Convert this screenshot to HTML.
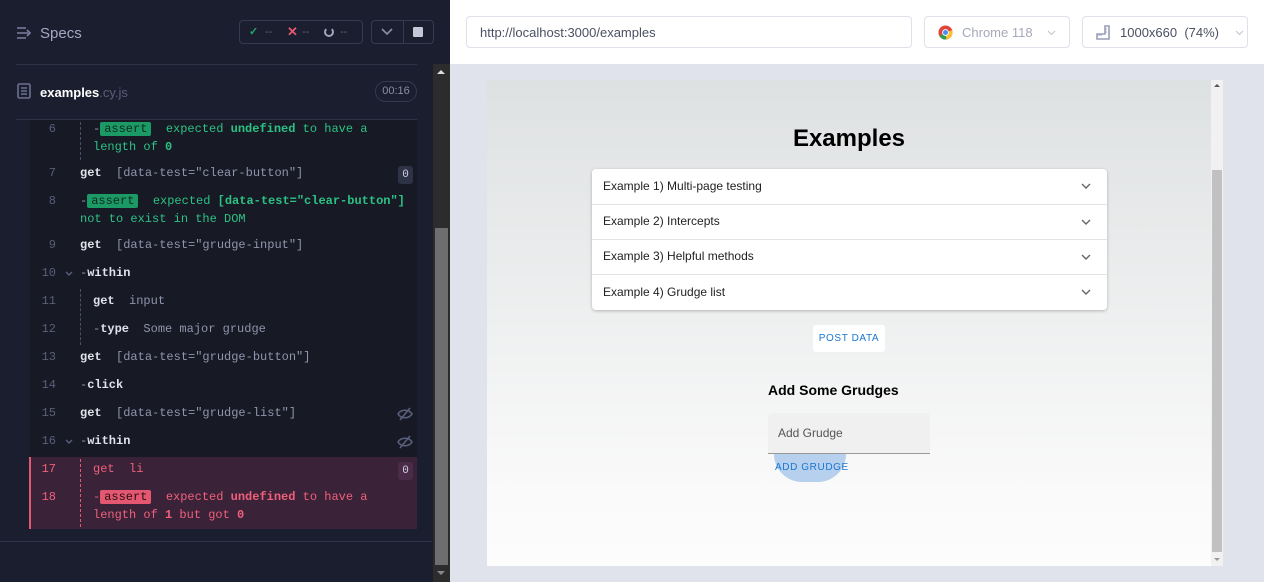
<!DOCTYPE html>
<html><head><meta charset="utf-8"><style>
*{box-sizing:border-box;margin:0;padding:0}
body{width:1264px;height:582px;overflow:hidden;position:relative;background:#e1e3ec;font-family:"Liberation Sans",sans-serif}
.a{position:absolute}
#left{left:0;top:0;width:450px;height:582px;background:#1b1e2e}
.mono{font-family:"Liberation Mono",monospace;font-size:12px;white-space:pre}
.ln{position:absolute;left:30px;width:26px;text-align:right;color:#5a5f7a;font-family:"Liberation Mono",monospace;font-size:12px}
.g{color:#e1e3ed;font-weight:bold}
.s{color:#9095ad}
.gr{color:#2cc283}
.gb{color:#2cc283;font-weight:bold}
.tag{background:#1c9a66;color:#0b2a1c;padding:0 4px;border-radius:2px}
.rt{color:#f0607a}
.rb{color:#f0607a;font-weight:bold}
.rtag{background:#e45770;color:#2a0d15;padding:0 4px;border-radius:2px}
.badge{position:absolute;left:398px;width:15px;height:18px;background:#2e3247;border-radius:3px;color:#d0d2e0;font-family:"Liberation Mono",monospace;font-size:11px;text-align:center;line-height:18px}
.acc{position:absolute;left:592px;width:515px;background:#fff;font-size:12px;color:#222;padding-left:11px}
.acc svg{position:absolute;right:16px;top:14px}
</style></head><body>
<div id="left" class="a">
  <svg class="a" style="left:16px;top:26px" width="16" height="14" viewBox="0 0 16 14"><path d="M1 2h9M1 7h11M1 12h9M11 4l3 3-3 3" stroke="#7b80a0" stroke-width="1.6" fill="none"/></svg>
  <div class="a" style="left:40px;top:25px;font-size:15px;color:#a4a8c0">Specs</div>
  <div class="a" style="left:239px;top:20px;width:124px;height:24px;border:1px solid #353a52;border-radius:4px;font-size:11px;color:#5c6180;line-height:22px">
    <span style="position:absolute;left:9px;color:#1fa971;font-weight:bold">✓</span><span style="position:absolute;left:25px">--</span>
    <span style="position:absolute;left:47px;color:#e45770;font-weight:bold;font-size:13px">✕</span><span style="position:absolute;left:62px">--</span>
    <span style="position:absolute;left:84px;top:6px;width:10px;height:10px;border:2px solid #a0a4bd;border-radius:50%;border-top-color:transparent"></span><span style="position:absolute;left:100px">--</span>
  </div>
  <div class="a" style="left:371px;top:20px;width:63px;height:24px;border:1px solid #353a52;border-radius:4px">
    <div class="a" style="left:31px;top:0;width:1px;height:22px;background:#353a52"></div>
    <svg class="a" style="left:9px;top:7px" width="12" height="8"><path d="M1 1l5 5 5-5" stroke="#8a8ea8" stroke-width="1.6" fill="none"/></svg>
    <div class="a" style="left:41px;top:6px;width:10px;height:10px;background:#c5c7d6;border-radius:1px"></div>
  </div>
  <div class="a" style="left:16px;top:64px;width:401px;height:1px;background:#2e3247"></div>
  <svg class="a" style="left:17px;top:83px" width="14" height="16"><rect x="1" y="1" width="12" height="14" rx="1.5" fill="none" stroke="#6b7090" stroke-width="1.6"/><path d="M4 5h6M4 8h6M4 11h6" stroke="#6b7090" stroke-width="1.4"/></svg>
  <div class="a" style="left:40px;top:85px;font-size:13px"><b style="color:#fff">examples</b><span style="color:#5a5f7a">.cy.js</span></div>
  <div class="a" style="left:375px;top:81px;width:42px;height:21px;border:1px solid #353a52;border-radius:11px;color:#8a8ea8;font-size:11px;text-align:center;line-height:19px">00:16</div>
  <div class="a" style="left:16px;top:119px;width:401px;height:1px;background:#2e3247"></div>
  <div class="a" style="left:30px;top:120px;width:387px;height:337px;background:#171925"></div>
  <div class="a" style="left:80px;top:122px;width:0;height:38px;border-left:1px dashed #4a4f6a"></div>
  <div class="a" style="left:80px;top:289px;width:0;height:56px;border-left:1px dashed #4a4f6a"></div>
  <div class="ln" style="top:122px">6</div>
  <div class="a mono" style="left:93px;top:122px"><span class="s">-</span><span class="tag">assert</span>  <span class="gr">expected</span> <span class="gb">undefined</span> <span class="gr">to have a</span></div>
  <div class="a mono" style="left:93px;top:140px"><span class="gr">length of</span> <span class="gb">0</span></div>
  <div class="ln" style="top:166px">7</div>
  <div class="a mono" style="left:80px;top:166px"><span class="g">get</span>  <span class="s">[data-test="clear-button"]</span></div>
  <div class="badge" style="top:166px">0</div>
  <div class="ln" style="top:194px">8</div>
  <div class="a mono" style="left:80px;top:194px"><span class="s">-</span><span class="tag">assert</span>  <span class="gr">expected</span> <span class="gb">[data-test="clear-button"]</span></div>
  <div class="a mono" style="left:80px;top:212px"><span class="gr">not to exist in the DOM</span></div>
  <div class="ln" style="top:238px">9</div>
  <div class="a mono" style="left:80px;top:238px"><span class="g">get</span>  <span class="s">[data-test="grudge-input"]</span></div>
  <div class="ln" style="top:266px">10</div>
  <svg class="a" style="left:65px;top:271px" width="8" height="6"><path d="M1 1l3 3 3-3" stroke="#5a5f7a" stroke-width="1.4" fill="none"/></svg>
  <div class="a mono" style="left:80px;top:266px"><span class="s">-</span><span class="g">within</span></div>
  <div class="ln" style="top:294px">11</div>
  <div class="a mono" style="left:93px;top:294px"><span class="g">get</span>  <span class="s">input</span></div>
  <div class="ln" style="top:322px">12</div>
  <div class="a mono" style="left:93px;top:322px"><span class="s">-</span><span class="g">type</span>  <span class="s">Some major grudge</span></div>
  <div class="ln" style="top:350px">13</div>
  <div class="a mono" style="left:80px;top:350px"><span class="g">get</span>  <span class="s">[data-test="grudge-button"]</span></div>
  <div class="ln" style="top:378px">14</div>
  <div class="a mono" style="left:80px;top:378px"><span class="s">-</span><span class="g">click</span></div>
  <div class="ln" style="top:406px">15</div>
  <div class="a mono" style="left:80px;top:406px"><span class="g">get</span>  <span class="s">[data-test="grudge-list"]</span></div>
  <svg class="a" style="left:397px;top:407px" width="16" height="14"><path d="M1 7c3-5 11-5 14 0c-3 5-11 5-14 0z" fill="none" stroke="#5a5f7a" stroke-width="1.6"/><path d="M3 13L13 1" stroke="#5a5f7a" stroke-width="1.6"/></svg>
  <div class="ln" style="top:434px">16</div>
  <svg class="a" style="left:65px;top:439px" width="8" height="6"><path d="M1 1l3 3 3-3" stroke="#5a5f7a" stroke-width="1.4" fill="none"/></svg>
  <div class="a mono" style="left:80px;top:434px"><span class="s">-</span><span class="g">within</span></div>
  <svg class="a" style="left:397px;top:435px" width="16" height="14"><path d="M1 7c3-5 11-5 14 0c-3 5-11 5-14 0z" fill="none" stroke="#5a5f7a" stroke-width="1.6"/><path d="M3 13L13 1" stroke="#5a5f7a" stroke-width="1.6"/></svg>
  <div class="a" style="left:29px;top:457px;width:388px;height:72px;background:#3a2238;border-left:2px solid #e45770"></div>
  <div class="a" style="left:80px;top:459px;width:0;height:68px;border-left:1px dashed #e45770"></div>
  <div class="ln" style="top:462px;color:#f0607a">17</div>
  <div class="a mono" style="left:93px;top:462px"><span class="rt">get  li</span></div>
  <div class="badge" style="top:462px;background:#4a2c48">0</div>
  <div class="ln" style="top:490px;color:#f0607a">18</div>
  <div class="a mono" style="left:93px;top:490px"><span class="rt">-</span><span class="rtag">assert</span>  <span class="rt">expected</span> <span class="rb">undefined</span> <span class="rt">to have a</span></div>
  <div class="a mono" style="left:93px;top:508px"><span class="rt">length of</span> <span class="rb">1</span> <span class="rt">but got</span> <span class="rb">0</span></div>
  <div class="a" style="left:0;top:541px;width:432px;height:1px;background:#2e3247"></div>
  <div class="a" style="left:433px;top:64px;width:17px;height:518px;background:#2c2c2c"></div>
  <div class="a" style="left:435px;top:228px;width:13px;height:337px;background:#6e6e6e"></div>
  <div class="a" style="left:437px;top:70px;width:0;height:0;border:4px solid transparent;border-bottom:4px solid #ddd;border-top:0"></div>
  <div class="a" style="left:437px;top:571px;width:0;height:0;border:4px solid transparent;border-top:4px solid #888;border-bottom:0"></div>
</div>
<div class="a" style="left:450px;top:0;width:814px;height:64px;background:#fff"></div>
<div class="a" style="left:466px;top:16px;width:446px;height:32px;border:1px solid #dfe1eb;border-radius:4px;font-size:13px;color:#4b4f62;line-height:32px;padding-left:13px">http://localhost:3000/examples</div>
<div class="a" style="left:924px;top:16px;width:146px;height:32px;border:1px solid #dfe1eb;border-radius:4px;font-size:13px;color:#a5a8ba;line-height:32px">
  <svg class="a" style="left:13px;top:8px" width="15" height="15" viewBox="0 0 16 16"><circle cx="8" cy="8" r="7.5" fill="#e0453a"/><path d="M8 8L1.5 11.8A7.5 7.5 0 0 0 9 15.4z" fill="#2f9e4f"/><path d="M8 8L9 15.4A7.5 7.5 0 0 0 15 5.5z" fill="#f5c330"/><path d="M8 8L15 5.5 8 .5z" fill="#e0453a"/><circle cx="8" cy="8" r="3.6" fill="#fff"/><circle cx="8" cy="8" r="2.7" fill="#4a8ff0"/></svg>
  <span class="a" style="left:37px">Chrome 118</span><svg class="a" style="left:122px;top:13px" width="9" height="6"><path d="M1 1l3.5 3.5L8 1" stroke="#c0c3d0" fill="none"/></svg>
</div>
<div class="a" style="left:1082px;top:16px;width:166px;height:32px;border:1px solid #dfe1eb;border-radius:4px;font-size:13px;color:#4b4f62;line-height:32px">
  <svg class="a" style="left:13px;top:8px" width="14" height="15"><path d="M1 14V9h8V1h4v13z" fill="none" stroke="#9a9db8" stroke-width="1.6"/><path d="M3 9v2M5 9v2M9 4h2M9 7h2" stroke="#9a9db8"/></svg>
  <span class="a" style="left:37px">1000x660 &nbsp;(74%)</span><svg class="a" style="left:152px;top:13px" width="9" height="6"><path d="M1 1l3.5 3.5L8 1" stroke="#c0c3d0" fill="none"/></svg>
</div>
<div class="a" style="left:487px;top:80px;width:724px;height:486px;background:linear-gradient(#dee1e2,#fafafa 85%,#fcfcfc)"></div>
<div class="a" style="left:1211px;top:80px;width:12px;height:486px;background:#f1f1f1"></div>
<div class="a" style="left:1212px;top:170px;width:10px;height:382px;background:#c1c1c1"></div>
<div class="a" style="left:1214px;top:84px;border:3px solid transparent;border-bottom:3px solid #555;border-top:0"></div>
<div class="a" style="left:1214px;top:558px;border:3px solid transparent;border-top:3px solid #999;border-bottom:0"></div>
<div class="a" style="left:487px;top:125px;width:724px;text-align:center;font-size:24px;font-weight:bold;color:#000">Examples</div>
<div class="a" style="left:592px;top:169px;width:515px;height:141px;border-radius:4px;box-shadow:0 1px 3px rgba(0,0,0,.25);background:#e3e3e3"></div>
<div class="acc" style="top:169px;height:35px;line-height:35px;border-radius:4px 4px 0 0">Example 1) Multi-page testing<svg width="10" height="6"><path d="M1 1l4 4 4-4" stroke="#666" stroke-width="1.4" fill="none"/></svg></div>
<div class="acc" style="top:205px;height:34px;line-height:33px">Example 2) Intercepts<svg width="10" height="6"><path d="M1 1l4 4 4-4" stroke="#666" stroke-width="1.4" fill="none"/></svg></div>
<div class="acc" style="top:240px;height:34px;line-height:33px">Example 3) Helpful methods<svg width="10" height="6"><path d="M1 1l4 4 4-4" stroke="#666" stroke-width="1.4" fill="none"/></svg></div>
<div class="acc" style="top:275px;height:35px;line-height:34px;border-radius:0 0 4px 4px">Example 4) Grudge list<svg width="10" height="6"><path d="M1 1l4 4 4-4" stroke="#666" stroke-width="1.4" fill="none"/></svg></div>
<div class="a" style="left:813px;top:325px;width:72px;height:27px;background:#fff;border-radius:3px;color:#1976d2;font-size:10px;letter-spacing:.6px;text-align:center;line-height:27px">POST DATA</div>
<div class="a" style="left:768px;top:382px;font-size:14px;font-weight:bold;color:#000">Add Some Grudges</div>
<div class="a" style="left:768px;top:413px;width:162px;height:41px;background:#f0f0f0;border-bottom:1px solid #999;border-radius:4px 4px 0 0;font-size:12px;color:#555;line-height:40px;padding-left:10px">Add Grudge</div>
<div class="a" style="left:774px;top:454px;width:72px;height:28px;background:#b6d0ee;border-radius:0 0 36px 36px"></div>
<div class="a" style="left:775px;top:462px;font-size:10px;color:#1976d2;letter-spacing:.6px">ADD GRUDGE</div>
</body></html>
